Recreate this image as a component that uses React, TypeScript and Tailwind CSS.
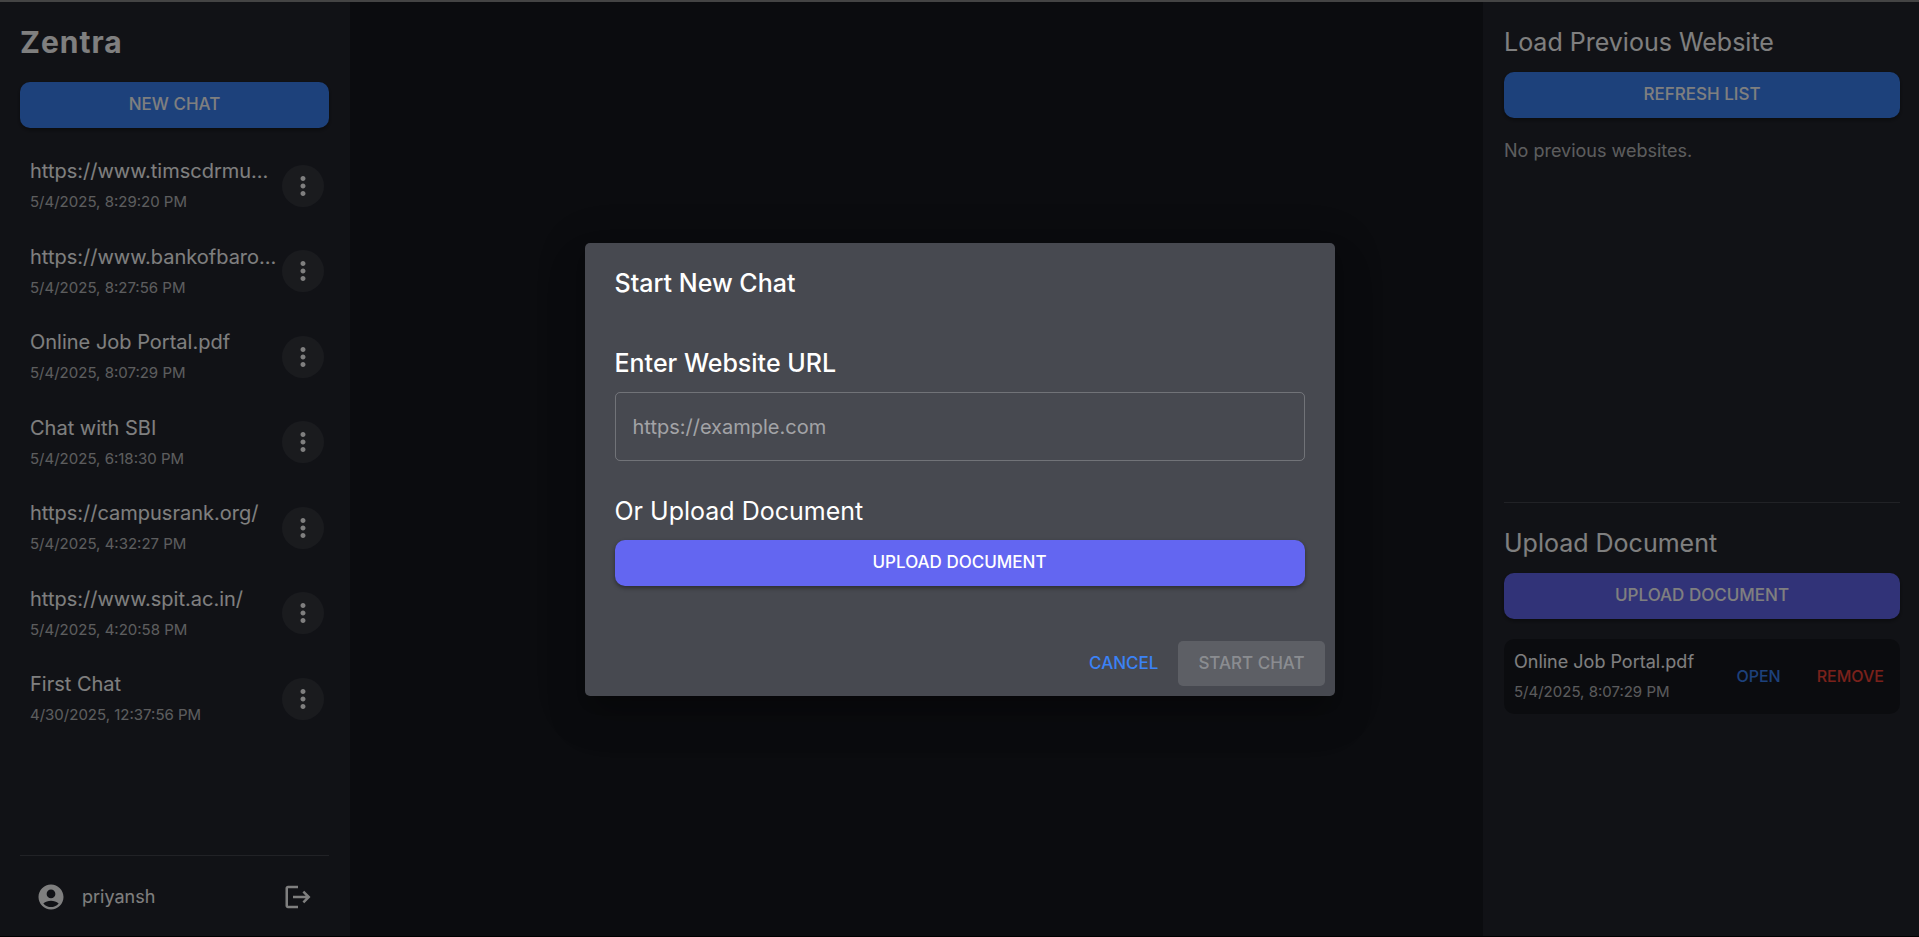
import React from "react";

type Chat = { title: string; date: string };

const chats: Chat[] = [
  { title: "https://www.timscdrmu…", date: "5/4/2025, 8:29:20 PM" },
  { title: "https://www.bankofbaro…", date: "5/4/2025, 8:27:56 PM" },
  { title: "Online Job Portal.pdf", date: "5/4/2025, 8:07:29 PM" },
  { title: "Chat with SBI", date: "5/4/2025, 6:18:30 PM" },
  { title: "https://campusrank.org/", date: "5/4/2025, 4:32:27 PM" },
  { title: "https://www.spit.ac.in/", date: "5/4/2025, 4:20:58 PM" },
  { title: "First Chat", date: "4/30/2025, 12:37:56 PM" },
];

function Icon({ d }: { d: string }) {
  return (
    <svg viewBox="0 0 24 24" className="size-[30px] fill-current" aria-hidden="true">
      <path d={d} />
    </svg>
  );
}

const MORE =
  "M12 8c1.1 0 2-.9 2-2s-.9-2-2-2-2 .9-2 2 .9 2 2 2m0 2c-1.1 0-2 .9-2 2s.9 2 2 2 2-.9 2-2-.9-2-2-2m0 6c-1.1 0-2 .9-2 2s.9 2 2 2 2-.9 2-2-.9-2-2-2";
const ACCOUNT =
  "M12 2C6.48 2 2 6.48 2 12s4.48 10 10 10 10-4.48 10-10S17.52 2 12 2m0 4c1.93 0 3.5 1.57 3.5 3.5S13.93 13 12 13s-3.5-1.57-3.5-3.5S10.07 6 12 6m0 14c-2.03 0-4.43-.82-6.14-2.88C7.55 15.8 9.68 15 12 15s4.45.8 6.14 2.12C16.43 19.18 14.03 20 12 20";
const LOGOUT =
  "m17 7-1.41 1.41L18.17 11H8v2h10.17l-2.58 2.58L17 17l5-5zM4 5h8V3H4c-1.1 0-2 .9-2 2v14c0 1.1.9 2 2 2h8v-2H4z";

function WideButton({ tone, children }: { tone: "blue" | "indigo"; children: React.ReactNode }) {
  const color = tone === "blue" ? "bg-[#3b82f6]" : "bg-[#6366f1]";
  return (
    <button
      type="button"
      className={`h-[46px] w-full shrink-0 rounded-[10px] text-[17px] font-medium text-white shadow-[0_2px_4px_rgba(0,0,0,0.4)] ${color}`}
    >
      {children}
    </button>
  );
}

function Sidebar() {
  return (
    <aside className="flex w-[350px] shrink-0 flex-col bg-[#23252d] px-5 pt-5 pr-[21px]">
      <h1 className="mb-5 text-[30px] leading-10 font-bold tracking-[1px]">Zentra</h1>
      <WideButton tone="blue">NEW CHAT</WideButton>
      <ul className="mt-[15px] min-h-0 flex-1 overflow-hidden">
        {chats.map((chat) => (
          <li key={chat.title} className="flex items-center justify-between py-[14px] pr-[5px] pl-[10px]">
            <div className="min-w-0">
              <p className="text-[20px] leading-7 whitespace-nowrap">{chat.title}</p>
              <p className="mt-1 text-[15px] leading-[1.7] text-white/70">{chat.date}</p>
            </div>
            <button
              type="button"
              aria-label={`Options for ${chat.title}`}
              className="flex size-[42px] shrink-0 items-center justify-center rounded-full bg-white/8"
            >
              <Icon d={MORE} />
            </button>
          </li>
        ))}
      </ul>
      <div className="flex items-center border-t border-white/15 px-4 pt-5 pb-[18px]">
        <Icon d={ACCOUNT} />
        <span className="ml-4 flex-1 text-[18px] leading-[42px]">priyansh</span>
        <button type="button" aria-label="Log out">
          <Icon d={LOGOUT} />
        </button>
      </div>
    </aside>
  );
}

function SourcesPanel() {
  return (
    <aside className="flex w-[436px] shrink-0 flex-col bg-[#23252d] pt-5 pr-[19px] pl-[21px]">
      <section className="flex-1">
        <h2 className="mb-[10px] text-[25px] leading-10">Load Previous Website</h2>
        <WideButton tone="blue">REFRESH LIST</WideButton>
        <p className="mt-5 text-[18px] leading-[26px] text-white/70">No previous websites.</p>
      </section>
      <section className="h-[434px] border-t border-white/15 pt-5">
        <h2 className="mb-[10px] text-[25px] leading-10">Upload Document</h2>
        <WideButton tone="indigo">UPLOAD DOCUMENT</WideButton>
        <div className="mt-5 flex items-center rounded-[10px] bg-[#17191f] px-[10px] pt-[9px] pb-[10px]">
          <div className="flex-1">
            <p className="text-[18px] leading-7">Online Job Portal.pdf</p>
            <p className="mt-1 text-[15px] leading-6 text-white/70">5/4/2025, 8:07:29 PM</p>
          </div>
          <button type="button" className="px-[6px] text-[16px] font-medium text-[#3b82f6]">
            OPEN
          </button>
          <button type="button" className="ml-6 px-[6px] text-[16px] font-medium text-[#f44336]">
            REMOVE
          </button>
        </div>
      </section>
    </aside>
  );
}

function NewChatDialog() {
  return (
    <div
      role="dialog"
      aria-modal="true"
      aria-labelledby="dialog-title"
      className="w-full max-w-[750px] rounded-[5px] bg-[#474950] shadow-[0_11px_15px_-7px_rgba(0,0,0,0.2),0_24px_38px_3px_rgba(0,0,0,0.14),0_9px_46px_8px_rgba(0,0,0,0.12)]"
    >
      <h2 id="dialog-title" className="px-[30px] py-5 text-[25px] leading-10 font-medium">
        Start New Chat
      </h2>
      <div className="px-[30px] pt-5 pb-[45px]">
        <label htmlFor="site-url" className="mb-[9px] block text-[25px] leading-10 font-medium">
          Enter Website URL
        </label>
        <input
          id="site-url"
          type="url"
          placeholder="https://example.com"
          className="block h-[69px] w-full rounded-[5px] border border-white/23 bg-transparent px-[17px] text-[20px] outline-none placeholder:text-white/50"
        />
        <h3 className="mt-[30px] mb-[9px] text-[25px] leading-10">Or Upload Document</h3>
        <WideButton tone="indigo">UPLOAD DOCUMENT</WideButton>
      </div>
      <div className="flex items-center justify-end gap-[10px] p-[10px]">
        <button type="button" className="h-[45px] px-[10px] text-[17px] font-medium text-[#3b82f6]">
          CANCEL
        </button>
        <button
          type="button"
          disabled
          className="h-[45px] rounded-[5px] bg-white/12 px-5 text-[17px] font-medium text-white/30"
        >
          START CHAT
        </button>
      </div>
    </div>
  );
}

export default function App() {
  return (
    <div className="relative flex h-screen flex-col border-t-2 border-b border-t-[#444444] border-b-black bg-[#17191f] font-['Inter',sans-serif] text-white">
      <div className="flex min-h-0 flex-1">
        <Sidebar />
        <main className="flex-1" />
        <SourcesPanel />
      </div>
      <div className="absolute inset-x-0 top-0 -bottom-px flex items-center justify-center bg-black/50">
        <NewChatDialog />
      </div>
    </div>
  );
}
